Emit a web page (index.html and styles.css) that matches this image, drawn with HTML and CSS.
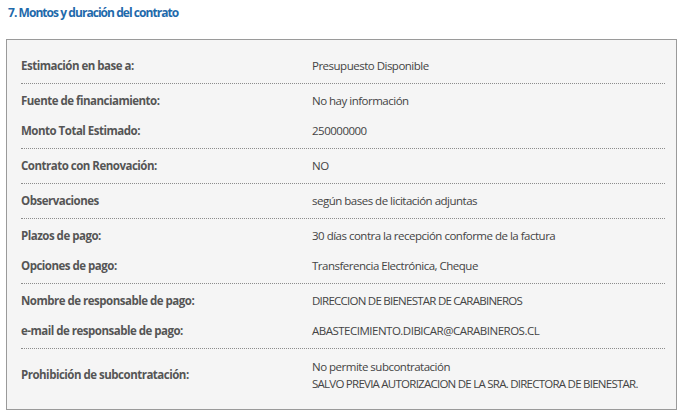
FILE: index.html
```html
<!DOCTYPE html>
<html lang="es">
<head>
<meta charset="utf-8">
<title>Montos y duración del contrato</title>
<link rel="stylesheet" href="styles.css">
</head>
<body>
<h2 class="title">7. Montos y duración del contrato</h2>
<div class="box">
  <div class="group">
    <div class="row"><div class="label">Estimación en base a:</div><div class="value">Presupuesto Disponible</div></div>
  </div>
  <div class="group">
    <div class="row"><div class="label">Fuente de financiamiento:</div><div class="value">No hay información</div></div>
    <div class="row"><div class="label">Monto Total Estimado:</div><div class="value">250000000</div></div>
  </div>
  <div class="group">
    <div class="row"><div class="label">Contrato con Renovación:</div><div class="value">NO</div></div>
  </div>
  <div class="group">
    <div class="row"><div class="label">Observaciones</div><div class="value">según bases de licitación adjuntas</div></div>
  </div>
  <div class="group">
    <div class="row"><div class="label">Plazos de pago:</div><div class="value">30 días contra la recepción conforme de la factura</div></div>
    <div class="row"><div class="label">Opciones de pago:</div><div class="value">Transferencia Electrónica, Cheque</div></div>
  </div>
  <div class="group">
    <div class="row"><div class="label">Nombre de responsable de pago:</div><div class="value caps">DIRECCION DE BIENESTAR DE CARABINEROS</div></div>
    <div class="row"><div class="label">e-mail de responsable de pago:</div><div class="value">ABASTECIMIENTO.DIBICAR@CARABINEROS.CL</div></div>
  </div>
  <div class="group last">
    <div class="row"><div class="label">Prohibición de subcontratación:</div><div class="value multi">No permite subcontratación<br><span class="caps">SALVO PREVIA AUTORIZACION DE LA SRA. DIRECTORA DE BIENESTAR.</span></div></div>
  </div>
</div>
</body>
</html>
```

FILE: styles.css
```css
html, body {
  margin: 0;
  padding: 0;
  background: #ffffff;
}
body {
  font-family: "Open Sans", sans-serif;
  font-size: 11.5px;
  letter-spacing: -0.5px;
  color: #444444;
}
.title {
  margin: 0;
  padding: 5px 0 0 8px;
  height: 39px;
  box-sizing: border-box;
  font-size: 12px;
  letter-spacing: -0.95px;
  font-weight: bold;
  color: #1f6aab;
  line-height: 16px;
}
.box {
  margin: 0 6px 0 6px;
  border: 1px solid #9a9a9a;
  background: #f5f5f5;
  padding: 9px 11px 8px 14px;
  width: 644px;
}
.group {
  padding: 2px 0;
  border-bottom: 1px dotted #8c8c8c;
}
.group.last {
  border-bottom: none;
}
.row {
  display: grid;
  grid-template-columns: 291px 1fr;
  align-items: center;
  padding: 7px 0;
  line-height: 16px;
}
.label {
  font-weight: bold;
  color: #555555;
}
.value.multi {
  line-height: 17px;
}
.caps {
  letter-spacing: -0.75px;
}
```
